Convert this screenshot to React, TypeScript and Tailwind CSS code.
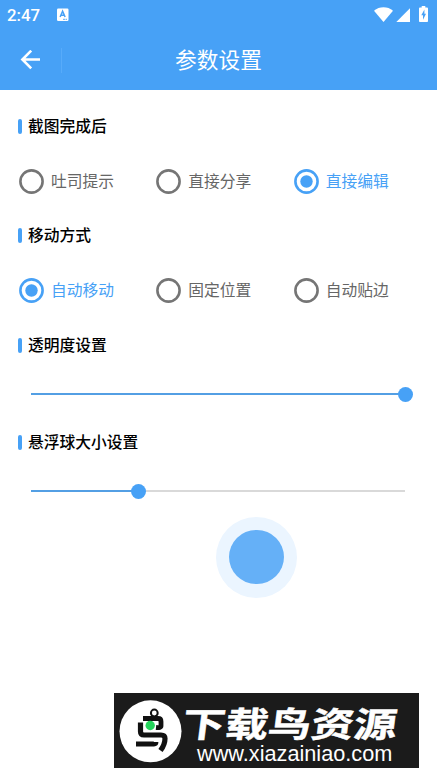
import { useState } from 'react';
import clsx from 'clsx';

const afterCapture = ['吐司提示', '直接分享', '直接编辑'];
const moveModes = ['自动移动', '固定位置', '自动贴边'];

export default function App() {
  const [action, setAction] = useState('直接编辑');
  const [mode, setMode] = useState('自动移动');

  return (
    <main className="flex h-[778px] w-[437px] flex-col overflow-hidden bg-white font-[Roboto,'Noto_Sans_CJK_SC',sans-serif]">
      <header className="h-[90px] shrink-0 bg-[#47a1f6] text-white">
        <StatusBar />
        <TitleBar title="参数设置" />
      </header>

      <div className="flex grow flex-col">
        <SectionTitle className="mt-6">截图完成后</SectionTitle>
        <RadioRow options={afterCapture} value={action} onChange={setAction} />

        <SectionTitle className="mt-[29.5px]">移动方式</SectionTitle>
        <RadioRow options={moveModes} value={mode} onChange={setMode} />

        <SectionTitle className="mt-[30px]">透明度设置</SectionTitle>
        <Slider percent={100} />

        <SectionTitle className="mt-[28px]">悬浮球大小设置</SectionTitle>
        <Slider percent={28.7} />

        <div className="mt-[18px] ml-[216px] flex size-[81px] items-center justify-center rounded-full bg-[#ebf5ff]">
          <div className="size-[54.6px] rounded-full bg-[#65b0f7]" />
        </div>

        <SiteBanner />
      </div>
    </main>
  );
}

function StatusBar() {
  return (
    <div className="flex h-[30px] items-center pl-[7px]">
      <span className="w-[50px] text-[16.8px] leading-none font-medium">2:47</span>
      <svg width="12" height="14" viewBox="0 0 12 14">
        <rect x="0" y="0.5" width="11.5" height="12.5" rx="1.2" fill="#fff" />
        <path d="M3.1 9 5.6 3.2 8.1 9M4.1 7.2h3" fill="none" stroke="#47a1f6" strokeWidth="1.5" />
        <path d="M6 11.3h4" stroke="#47a1f6" strokeWidth="0.9" strokeDasharray="2.4 .5" />
      </svg>

      <svg className="mb-[2px] ml-[305px]" width="56" height="18" viewBox="0 0 56 18" fill="#fff">
        <path d="M0 5.7C5.4 1.2 13.6 1.2 19 5.7L9.5 17z" />
        <path d="M36 3.2V17H22.3z" />
        <path d="M47.7 2.5V1h3.6v1.5h1.6c.6 0 1.1.5 1.1 1.1v12.3c0 .6-.5 1.1-1.1 1.1h-6.8c-.6 0-1.1-.5-1.1-1.1V3.6c0-.6.5-1.1 1.1-1.1z" />
        <path d="M50.4 4.5 47.3 10.3h1.7v4.4l3-6h-1.6z" fill="#47a1f6" />
      </svg>
    </div>
  );
}

function TitleBar({ title }: { title: string }) {
  return (
    <div className="flex h-[60px] items-center">
      <button type="button" aria-label="返回" className="flex w-[61px] pl-5">
        <svg width="21" height="20" viewBox="0 0 21 20" fill="none" stroke="#fff" strokeWidth="2.6">
          <path d="M20 9.5H2.6M11.2 .7 2.4 9.5l8.8 8.8" />
        </svg>
      </button>
      <div className="h-[25px] w-px bg-[#57abfa]" />
      <h1 className="w-[313px] pt-[2px] text-center text-[21.7px] leading-none font-normal">{title}</h1>
    </div>
  );
}

function SectionTitle({ className, children }: { className: string; children: string }) {
  return (
    <h2 className={clsx('flex h-[25px] shrink-0 items-center pl-[18px] text-[15.75px] font-medium text-black', className)}>
      <span className="mr-[6px] h-[15px] w-1 rounded-full bg-[#47a1f6]" />
      <span className="pt-px">{children}</span>
    </h2>
  );
}

function RadioRow({
  options,
  value,
  onChange
}: {
  options: string[];
  value: string;
  onChange: (value: string) => void;
}) {
  return (
    <div className="mt-[29.5px] grid h-[25px] w-[412px] shrink-0 grid-cols-3" role="radiogroup">
      {options.map((option) => {
        const checked = option === value;

        return (
          <button
            key={option}
            type="button"
            role="radio"
            aria-checked={checked}
            onClick={() => onChange(option)}
            className={clsx(
              'flex items-center gap-[7px] pl-[19px] text-[15.75px] leading-none',
              checked ? 'text-[#47a1f6]' : 'text-[#666]'
            )}
          >
            <svg
              className={clsx('shrink-0', checked ? 'text-[#47a1f6]' : 'text-[#757575]')}
              width="25"
              height="25"
              viewBox="0 0 25 25"
            >
              <circle cx="12.5" cy="12.5" r="11.1" fill="none" stroke="currentColor" strokeWidth="2.6" />
              {checked ? <circle cx="12.5" cy="12.5" r="6.2" fill="currentColor" /> : null}
            </svg>
            <span className="pt-[2px]">{option}</span>
          </button>
        );
      })}
    </div>
  );
}

function Slider({ percent }: { percent: number }) {
  return (
    <div className="mt-[29px] mr-[32px] ml-[31px] flex h-[15px] shrink-0 items-center">
      <div className="h-[2px] shrink-0 bg-[#539fe4]" style={{ width: `${percent}%` }} />
      <div className="relative z-10 -mx-[7.5px] size-[15px] shrink-0 rounded-full bg-[#47a1f6]" />
      <div className="h-[2px] grow bg-[#d9d9d9]" />
    </div>
  );
}

function SiteBanner() {
  return (
    <div className="mt-auto mb-[10px] ml-[114px] flex h-[75px] w-[305px] items-center bg-[#1b1b1b] pl-[5px] text-white">
      <svg className="mt-[2px] shrink-0" width="63" height="63" viewBox="0 0 63 63" fill="none">
        <circle cx="31.5" cy="31.3" r="31" fill="#fff" />
        <g stroke="#111" strokeLinejoin="round">
          <circle cx="35.3" cy="13" r="3.4" strokeWidth="2" />
          <path d="M24 18.5h15q3 0 3 3v4.5q0 2-5 1.5" strokeWidth="4.8" />
          <path d="M21.5 22.5v9q0 3.5 3.5 3.5h17q4 0 4 3.5c0 5-1.5 8-4.5 12" strokeWidth="5.2" />
          <path d="M17 44h18q2 0 2-2" strokeWidth="4.8" />
        </g>
        <circle cx="31.2" cy="25.5" r="4.7" fill="#24d45b" />
      </svg>
      <div className="mt-2 ml-px flex flex-col">
        <strong className="h-[36px] w-[172px] origin-left scale-x-[1.24] -skew-x-6 font-['Noto_Sans_CJK_SC',sans-serif] text-[34.6px] leading-[37px] font-bold whitespace-nowrap [-webkit-text-stroke:0.5px_white]">
          下载鸟资源
        </strong>
        <span className="mt-[2px] ml-[14px] font-['Liberation_Sans',sans-serif] text-[21.7px] leading-[24px]">
          www.xiazainiao.com
        </span>
      </div>
    </div>
  );
}
